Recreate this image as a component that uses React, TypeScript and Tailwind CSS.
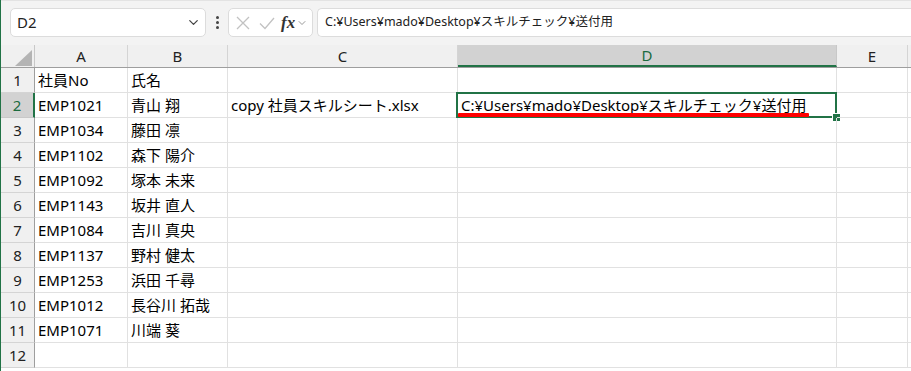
import { ChevronDown } from "lucide-react";

const cols = [
  { key: "A", w: "w-[93px]" },
  { key: "B", w: "w-[100px]" },
  { key: "C", w: "w-[230px]" },
  { key: "D", w: "w-[379px]" },
  { key: "E", w: "w-[71px]" },
];

const rows: string[][] = [
  ["社員No", "氏名", "", ""],
  ["EMP1021", "青山 翔", "copy 社員スキルシート.xlsx", "C:¥Users¥mado¥Desktop¥スキルチェック¥送付用"],
  ["EMP1034", "藤田 凛", "", ""],
  ["EMP1102", "森下 陽介", "", ""],
  ["EMP1092", "塚本 未来", "", ""],
  ["EMP1143", "坂井 直人", "", ""],
  ["EMP1084", "吉川 真央", "", ""],
  ["EMP1137", "野村 健太", "", ""],
  ["EMP1253", "浜田 千尋", "", ""],
  ["EMP1012", "長谷川 拓哉", "", ""],
  ["EMP1071", "川端 葵", "", ""],
  ["", "", "", ""],
];

export default function App() {
  return (
    <div className="w-[911px] h-[371px] overflow-hidden bg-white border-l border-[#217346] font-['Noto_Sans','Noto_Sans_CJK_JP',sans-serif] text-black">
      {/* Toolbar */}
      <div className="h-[45px] bg-[#f3f3f3] border-t border-[#e3e3e3] flex items-start pt-[7px]">
        <div className="ml-[9px] w-[196px] h-[29px] bg-white border border-[#dcdcdc] rounded-[5px] flex items-center pl-[6px] pr-[4px]">
          <span className="text-[15px] text-[#222] flex-1">D2</span>
          <ChevronDown className="w-[15px] h-[15px] text-[#444]" strokeWidth={2} />
        </div>
        <div className="w-[22px] h-[29px] flex flex-col items-center justify-center gap-[2px]">
          <span className="w-[3px] h-[3px] rounded-full bg-[#444]" />
          <span className="w-[3px] h-[3px] rounded-full bg-[#444]" />
          <span className="w-[3px] h-[3px] rounded-full bg-[#444]" />
        </div>
        <div className="w-[85px] h-[29px] bg-white border border-[#dcdcdc] rounded-[5px] flex items-center pl-[4px]">
          <svg width="18" height="18" viewBox="0 0 18 18" className="ml-[1px]">
            <path d="M3 3 L15 15 M15 3 L3 15" stroke="#c2c2c2" strokeWidth="1.3" fill="none" />
          </svg>
          <svg width="20" height="18" viewBox="0 0 20 18" className="ml-[5px]">
            <path d="M3 9.5 L8 14.5 L17 4" stroke="#c2c2c2" strokeWidth="1.3" fill="none" />
          </svg>
          <span className="ml-[4px] font-['Liberation_Serif',serif] italic text-[17px] leading-none text-[#333] font-bold">fx</span>
          <ChevronDown className="ml-[1px] w-[12px] h-[12px] text-[#777]" strokeWidth={1.5} />
        </div>
        <div className="ml-[4px] flex-1 h-[29px] bg-white border border-r-0 border-[#dcdcdc] rounded-l-[5px] flex items-center pl-[7px]">
          <span className="text-[12.5px] text-[#222]">C:¥Users¥mado¥Desktop¥スキルチェック¥送付用</span>
        </div>
      </div>

      {/* Column headers */}
      <div className="flex h-[23px] bg-[#f0f0f0] border-b border-[#9e9e9e]">
        <div className="w-[34px] border-r border-[#c8c8c8] relative shrink-0">
          <svg width="17" height="16" viewBox="0 0 17 16" className="absolute right-[2px] bottom-[1px]">
            <polygon points="17,0 17,16 0,16" fill="#b4b4b4" />
          </svg>
        </div>
        {cols.map((c) => (
          <div
            key={c.key}
            className={`${c.w} shrink-0 flex items-center justify-center text-[15px] ${
              c.key === "D"
                ? "bg-[#d2d2d2] text-[#1b6b3f] border-b-2 border-[#217346] border-r border-r-[#c8c8c8]"
                : "text-[#222] border-r border-[#d4d4d4]"
            }`}
          >
            {c.key}
          </div>
        ))}
        <div className="flex-1" />
      </div>

      {/* Rows */}
      {rows.map((r, i) => {
        const n = i + 1;
        const active = n === 2;
        return (
          <div key={n} className="flex h-[25px]">
            <div
              className={`w-[34px] shrink-0 flex items-center justify-center text-[15px] border-b ${
                active
                  ? "bg-[#d2d2d2] text-[#1b6b3f] border-r-2 border-r-[#217346] border-b-[#c8c8c8]"
                  : "bg-[#f0f0f0] text-[#222] border-r border-r-[#9e9e9e] border-b-[#d4d4d4]"
              }`}
            >
              {n}
            </div>
            {cols.map((c, j) => (
              <div
                key={c.key}
                className={`${c.w} shrink-0 relative border-r border-b border-[#e1e1e1] flex items-center pl-[3px] text-[15px] whitespace-nowrap`}
              >
                {j < 4 ? r[j] : ""}
                {active && c.key === "D" && (
                  <>
                    <div className="absolute -left-[2px] -top-[1px] right-[-1px] bottom-[-1px] border-2 border-[#217346] pointer-events-none" />
                    <div className="absolute left-[0px] bottom-[0px] w-[351px] h-[4px] bg-[#ff0000] rounded-[1px]" />
                    <div className="absolute -right-[5px] -bottom-[5px] w-[7px] h-[7px] bg-[#217346] border border-white box-content" />
                  </>
                )}
              </div>
            ))}
            <div className="flex-1 border-b border-[#e1e1e1]" />
          </div>
        );
      })}
    </div>
  );
}
